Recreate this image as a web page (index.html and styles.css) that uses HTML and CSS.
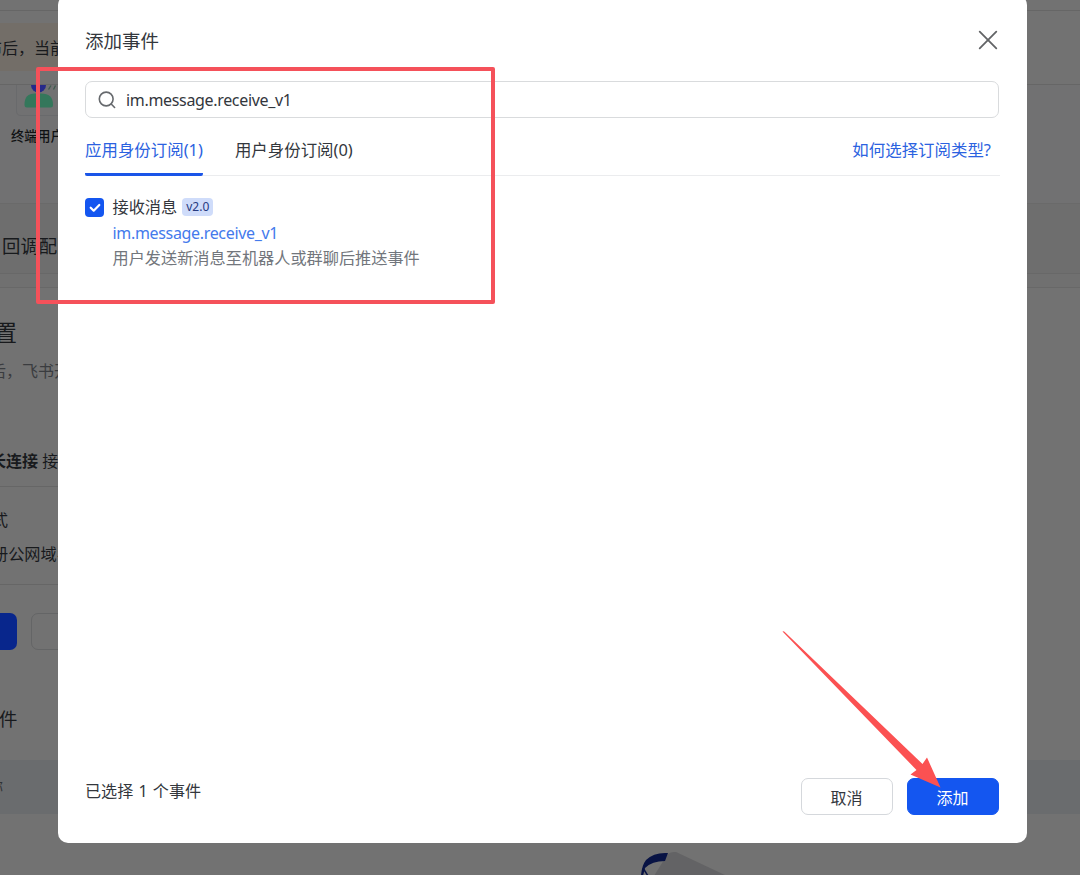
FILE: index.html
```html
<!DOCTYPE html>
<html lang="zh-CN">
<head>
<meta charset="utf-8">
<title>添加事件</title>
<link rel="stylesheet" href="styles.css">
</head>
<body>
<div class="page">
  <div class="topbar"></div>
  <div class="notice"><div class="notice-band"><span>布后，当前</span></div></div>
  <div class="flow">
    <div class="avatar">
      <svg width="44" height="31" viewBox="0 0 44 31">
        <path d="M.5 0V26Q.5 30.500 5 30.500H44" fill="none" stroke="#696a6c"/>
        <circle cx="22.500" cy="0" r="7.500" fill="#25298a"/>
        <path d="M8.500 19.500Q8.500 8.500 19 8.500H25Q37 8.500 37 19.500V20Q37 22.500 34.500 22.500H11Q8.500 22.500 8.500 20Z" fill="#34775b"/>
        <path d="M32.500 4.500L35 .5M37.500 4.500L39.500 .5" stroke="#3d5a4d" stroke-width="1.300"/>
      </svg>
    </div>
    <div class="flow-name">终端用户</div>
  </div>
  <div class="tabbar"><span>回调配置</span></div>
  <div class="gap"></div>
  <div class="panel">
    <div class="panel-title">置</div>
    <div class="panel-desc">后，飞书开</div>
    <div class="mode"><b>长连接</b> 接收</div>
    <div class="detail"><p class="mode-kind">式</p><p class="mode-note">册公网域名</p></div>
    <div class="panel-actions"><i class="save"></i><i class="reset"></i></div>
    <div class="sub-title">件</div>
    <div class="table-head"><span>称</span></div>
    <div class="empty">
      <svg width="90" height="25" viewBox="0 0 90 25">
        <path d="M13 25L26 4Q29 .5 35 1L86 25Z" fill="#636365"/>
        <path d="M0 24Q1 14 5 9Q13 1 27 2L24 10Q11 10 4 17L2 25Z" fill="#081344"/>
        <path d="M2 17L7 25" stroke="#081344" stroke-width="1.500"/>
      </svg>
    </div>
  </div>
</div>

<div class="modal">
  <header class="modal-head">
    <h1>添加事件</h1>
    <svg class="close" width="20" height="20" viewBox="0 0 20 20"><path d="M1.700 1.700L18.300 18.300M18.300 1.700L1.700 18.300"/></svg>
  </header>
  <div class="search">
    <svg width="18" height="18" viewBox="0 0 18 18"><circle cx="8.200" cy="8" r="6.900"/><path d="M13.200 13L16.600 16.500"/></svg>
    <span>im.message.receive_v1</span>
  </div>
  <nav class="tabs">
    <span class="tab active">应用身份订阅(1)</span>
    <span class="tab">用户身份订阅(0)</span>
    <a class="help">如何选择订阅类型?</a>
  </nav>
  <div class="event">
    <span class="check"><svg width="12" height="10" viewBox="0 0 12 10"><path d="M1.700 4.700L4.700 7.700L10.300 2"/></svg></span>
    <div class="event-body">
      <div class="event-name">接收消息<span class="version">v2.0</span></div>
      <div class="event-code">im.message.receive_v1</div>
      <div class="event-desc">用户发送新消息至机器人或群聊后推送事件</div>
    </div>
  </div>
  <footer class="modal-foot">
    <span class="count">已选择 1 个事件</span>
    <span class="btn">取消</span>
    <span class="btn primary">添加</span>
  </footer>
</div>

<div class="highlight"></div>
<svg class="arrow" width="160" height="160" viewBox="0 0 160 160"><path d="M.5 1.500Q1.500 .8 2.500 1.800L140.500 134L145 127.500L158.500 157.500L128.500 144.500L134.500 140Z"/></svg>
</body>
</html>
```
FILE: styles.css
```css
* { box-sizing: border-box; }
body {
  margin: 0;
  width: 1080px;
  height: 875px;
  overflow: hidden;
  position: relative;
  background: #727272;
  color: #33373d;
  font-family: "Noto Sans", "Noto Sans CJK SC", sans-serif;
  font-size: 16px;
  line-height: 24px;
}
p { margin: 0; }
svg { display: block; }

.page {
  height: 875px;
  overflow: hidden;
  color: #181a1d;
  white-space: nowrap;
}
.topbar { height: 11px; border-bottom: 1px solid #666; }
.notice { height: 74px; padding-top: 12px; border-bottom: 1px solid #666; }
.notice-band {
  width: 58px;
  height: 48px;
  padding-top: 13px;
  background: #736e68;
  overflow: hidden;
}
.notice-band span { margin-left: -14px; }
.flow { height: 119px; border-bottom: 1px solid #6a6a6a; background: #717172; }
.avatar { margin-left: 16px; }
.flow-name {
  margin: 8px 0 0 11px;
  font-size: 13.200px;
  font-weight: 500;
  color: #101113;
}
.tabbar {
  height: 70px;
  padding: 30px 0 0 2px;
  border-bottom: 1px solid #686868;
  background: #6e6e6e;
  font-size: 18.400px;
}
.gap { height: 14px; background: #707070; border-bottom: 1px solid #686868; }
.panel-title { margin: 28px 0 0 -6px; font-size: 23px; line-height: 32px; }
.panel-desc { margin: 11px 0 0 -10px; color: #3a3c3f; }
.mode, .detail { width: 1000px; border-bottom: 1px solid #666; }
.mode { height: 104px; padding-top: 66px; text-indent: -10px; }
.detail { height: 98px; padding-top: 21px; }
.mode-kind { margin-left: -8px; }
.mode-note { margin: 10px 0 0 -8px; font-size: 16.200px; }
.panel-actions { display: flex; gap: 14px; padding-top: 28px; }
.save { width: 17px; height: 37px; border-radius: 0 7px 7px 0; background: #08268c; }
.reset { width: 90px; height: 37px; border-radius: 7px; border: 1px solid #646566; }
.sub-title { margin: 55px 0 0 -1px; font-size: 18.400px; line-height: 28px; }
.table-head {
  height: 54px;
  margin-top: 27px;
  padding-top: 15px;
  background: #6a6c6e;
  font-size: 14px;
  color: #303235;
}
.table-head span { margin-left: -11px; }
.empty { margin: 37px 0 0 641px; }

.modal {
  position: absolute;
  left: 58px;
  top: -5px;
  width: 969px;
  height: 848px;
  padding: 5px 28px 28px 27px;
  display: flex;
  flex-direction: column;
  background: #fff;
  border-radius: 10px;
}
.modal-head {
  height: 81px;
  padding: 0 1px 2px 0;
  display: flex;
  align-items: center;
  justify-content: space-between;
}
.modal-head h1 { margin: 2px 0 0; font-size: 18.500px; font-weight: 400; line-height: 28px; }
.close { fill: none; stroke: #626466; stroke-width: 1.800; stroke-linecap: round; }
.search {
  height: 37px;
  padding-left: 12px;
  display: flex;
  align-items: center;
  gap: 10px;
  border: 1px solid #d9dbdd;
  border-radius: 7px;
  letter-spacing: -.330px;
}
.search svg { fill: none; stroke: #66696d; stroke-width: 1.600; stroke-linecap: round; }
.tabs {
  height: 58px;
  margin-right: -1px;
  padding-top: 20px;
  display: flex;
  gap: 32px;
  border-bottom: 1px solid #ebecee;
  font-size: 16.450px;
}
.tab { height: 38px; }
.tab.active {
  color: #2b62e0;
  background: linear-gradient(#1a55e8, #1a55e8) bottom / 100% 3px no-repeat;
  border-radius: 0 0 2px 2px;
}
.help { margin-left: auto; margin-right: 9px; color: #2b62e0; }
.event { display: flex; gap: 8.500px; padding-top: 17px; }
.check {
  width: 19px;
  height: 19px;
  margin-top: 5px;
  display: grid;
  place-items: center;
  background: #1456f0;
  border-radius: 4px;
}
.check svg { fill: none; stroke: #fff; stroke-width: 2.200; stroke-linecap: round; stroke-linejoin: round; }
.event-name { height: 27px; padding-top: 1px; display: flex; align-items: center; gap: 5px; font-size: 16.200px; }
.version {
  height: 18px;
  padding: 0 4px;
  border-radius: 4px;
  background: #cfdcfa;
  color: #273a80;
  font-size: 12px;
  line-height: 18px;
}
.event-code { height: 26px; color: #447aec; line-height: 26px; letter-spacing: -.330px; }
.event-desc { height: 26px; color: #72767c; font-size: 16.180px; }
.modal-foot { margin-top: auto; display: flex; align-items: center; gap: 14px; }
.count { margin-right: auto; padding-bottom: 11px; font-size: 16.100px; word-spacing: 1px; }
.btn {
  width: 92px;
  height: 37px;
  padding-right: 1px;
  border: 1px solid #d5d8dc;
  border-radius: 7px;
  line-height: 38px;
  text-align: center;
}
.btn.primary { background: #1456f0; border-color: #1456f0; color: #fff; }

.highlight {
  position: absolute;
  left: 36px;
  top: 67px;
  width: 459px;
  height: 237px;
  border: 4px solid #f5515a;
  border-radius: 2px;
}
.arrow { position: absolute; left: 782px; top: 630px; fill: #fb5152; }
```
